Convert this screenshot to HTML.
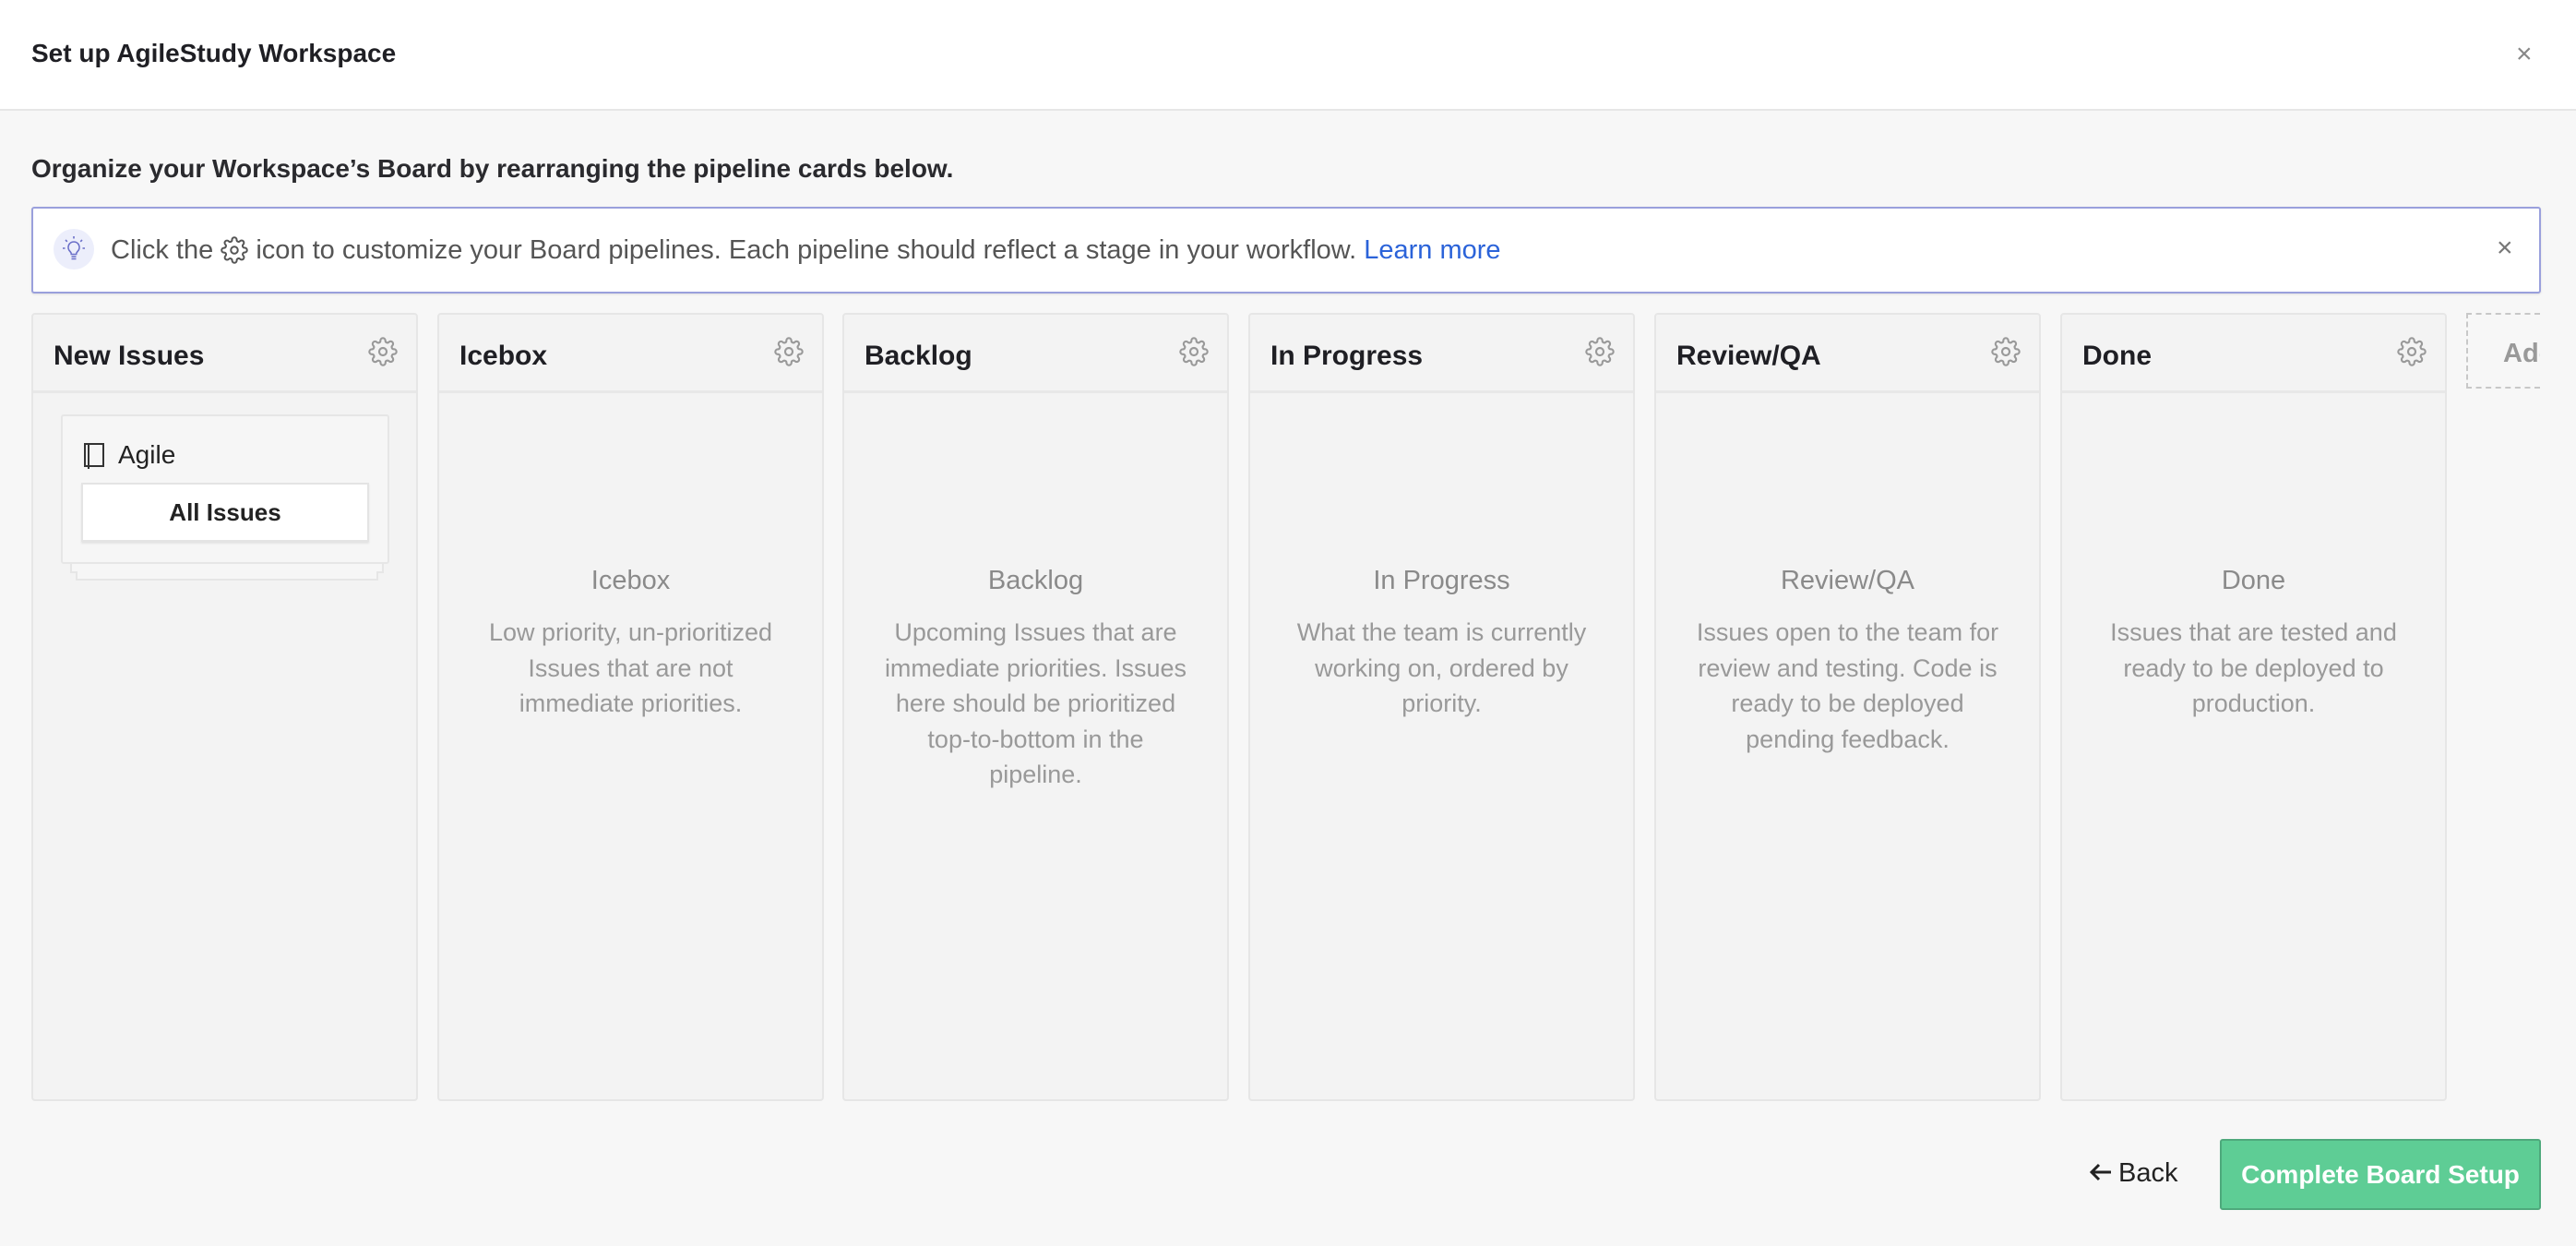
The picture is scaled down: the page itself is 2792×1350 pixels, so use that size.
<!DOCTYPE html>
<html><head><meta charset="utf-8"><style>
*{box-sizing:border-box;margin:0;padding:0}
body{width:2792px;height:1350px;background:#f7f7f7;font-family:"Liberation Sans",Arial,sans-serif;position:relative;overflow:hidden;color:#222}
.hdr{position:absolute;left:0;top:0;width:2792px;height:120px;background:#fff;border-bottom:2px solid #e6e6e6}
.hdr h1{position:absolute;left:34px;top:42px;font-size:28px;font-weight:bold;color:#1f1f24}
.x{position:absolute;color:#888;font-size:30px;line-height:30px}
.intro{position:absolute;left:34px;top:167px;font-size:28px;font-weight:bold;color:#2a2a2e}
.banner{position:absolute;left:34px;top:224px;width:2720px;height:94px;background:#fff;border:2px solid #9aa0dc;border-radius:3px;box-shadow:0 1px 2px rgba(0,0,0,.1)}
.bulb{position:absolute;left:22px;top:22px;width:44px;height:44px;border-radius:50%;background:#eceefb}
.btext{position:absolute;left:84px;top:29px;font-size:29px;color:#555;white-space:nowrap}
.btext a{color:#2b63d9;text-decoration:none}
.col{position:absolute;top:339px;width:419px;height:854px;background:#f3f3f3;border:2px solid #e6e6e6;border-radius:4px}
.ch{height:85px;border-bottom:3px solid #e8e8e8;position:relative}
.ch span{position:absolute;left:22px;top:28px;font-size:30px;font-weight:bold;color:#1f1f24}
.ch svg{position:absolute;right:20px;top:24px}
.es{position:absolute;left:0;right:0;top:272px;text-align:center;color:#8a8a8a}
.es b{display:block;font-weight:normal;font-size:29px;margin-bottom:20px}
.es p{font-size:27px;line-height:38.5px;color:#999;margin-top:4px}
.card{position:absolute;left:30px;top:108px;width:356px;height:162px;background:#f6f6f6;border:2px solid #e6e6e6;border-radius:3px}
.stk{position:absolute;background:#f6f6f6;border:2px solid #e6e6e6;border-top:none}
.allb{position:absolute;left:20px;top:72px;width:312px;height:64px;background:#fff;border:2px solid #e4e4e4;box-shadow:0 2px 2px rgba(0,0,0,.08);text-align:center;line-height:60px;font-size:26px;font-weight:bold;color:#222}
.add{position:absolute;left:2673px;top:339px;width:80px;height:82px;border:2px dashed #c8c8c8;border-right:none;overflow:hidden}
.add span{position:absolute;left:38px;top:26px;font-size:29px;font-weight:bold;color:#999}
.back{position:absolute;left:2264px;top:1255px;font-size:29px;color:#222}
.go{position:absolute;left:2406px;top:1234px;width:348px;height:77px;background:#5ecd95;border:2px solid #4ea97c;border-radius:3px;color:#fff;font-size:28px;font-weight:bold;text-align:center;line-height:73px}
</style></head><body>
<div class="hdr"><h1>Set up AgileStudy Workspace</h1><div class="x" style="left:2727px;top:44px">×</div></div>
<div class="intro">Organize your Workspace’s Board by rearranging the pipeline cards below.</div>
<div class="banner">
 <div class="bulb"><svg width="44" height="44" viewBox="0 0 44 44" fill="none" stroke="#6a6fc8" stroke-width="1.6"><path d="M22 14a6 6 0 0 0-4 10.5c1 1 1.3 2 1.3 3h5.4c0-1 .3-2 1.3-3A6 6 0 0 0 22 14z"/><path d="M19.5 30h5M19.5 32.5h5M22 8v2.5M13 12l1.8 1.8M31 12l-1.8 1.8M10 21h2.5M34 21h-2.5"/></svg></div>
 <div class="btext">Click the <svg width="30" height="30" viewBox="0 0 24 24" style="vertical-align:-6px"><use href="#gear2"/></svg> icon to customize your Board pipelines. Each pipeline should reflect a stage in your workflow. <a>Learn more</a></div>
 <div class="x" style="left:2670px;top:28px;color:#777">×</div>
</div>

<svg width="0" height="0" style="position:absolute"><defs>
<path id="gp" d="M19.4 15a1.65 1.65 0 0 0 .33 1.82l.06.06a2 2 0 1 1-2.83 2.83l-.06-.06a1.65 1.65 0 0 0-1.82-.33 1.65 1.65 0 0 0-1 1.51V21a2 2 0 1 1-4 0v-.09A1.65 1.65 0 0 0 9 19.4a1.65 1.65 0 0 0-1.82.33l-.06.06a2 2 0 1 1-2.83-2.83l.06-.06a1.65 1.65 0 0 0 .33-1.82 1.65 1.65 0 0 0-1.51-1H3a2 2 0 1 1 0-4h.09A1.65 1.65 0 0 0 4.6 9a1.65 1.65 0 0 0-.33-1.82l-.06-.06a2 2 0 1 1 2.83-2.83l.06.06a1.65 1.65 0 0 0 1.82.33H9a1.65 1.65 0 0 0 1-1.51V3a2 2 0 1 1 4 0v.09a1.65 1.65 0 0 0 1 1.51 1.65 1.65 0 0 0 1.82-.33l.06-.06a2 2 0 1 1 2.83 2.83l-.06.06a1.65 1.65 0 0 0-.33 1.82V9a1.65 1.65 0 0 0 1.51 1H21a2 2 0 1 1 0 4h-.09a1.65 1.65 0 0 0-1.51 1z"/>
<g id="gear" fill="none" stroke="#999" stroke-width="1.6"><circle cx="12" cy="12" r="3"/><use href="#gp"/></g>
<g id="gear2" fill="none" stroke="#555" stroke-width="1.6"><circle cx="12" cy="12" r="3"/><use href="#gp"/></g>
</defs></svg>

<div class="col" style="left:34px"><div class="ch"><span>New Issues</span><svg width="32" height="32" viewBox="0 0 24 24"><use href="#gear"/></svg></div>
 <div class="stk" style="left:40px;top:268px;width:340px;height:12px"></div>
 <div class="stk" style="left:46px;top:278px;width:328px;height:10px"></div>
 <div class="card"><svg style="position:absolute;left:22px;top:28px" width="24" height="30" viewBox="0 0 24 30" fill="none" stroke="#333" stroke-width="2"><rect x="2" y="2" width="20" height="24"/><path d="M6 2v24M6 26v3"/></svg><span style="position:absolute;left:60px;top:26px;font-size:28px;color:#222">Agile</span><div class="allb">All Issues</div></div>
</div>
<div class="col" style="left:474px"><div class="ch"><span>Icebox</span><svg width="32" height="32" viewBox="0 0 24 24"><use href="#gear"/></svg></div>
 <div class="es"><b>Icebox</b><p>Low priority, un-prioritized<br>Issues that are not<br>immediate priorities.</p></div></div>
<div class="col" style="left:913px"><div class="ch"><span>Backlog</span><svg width="32" height="32" viewBox="0 0 24 24"><use href="#gear"/></svg></div>
 <div class="es"><b>Backlog</b><p>Upcoming Issues that are<br>immediate priorities. Issues<br>here should be prioritized<br>top-to-bottom in the<br>pipeline.</p></div></div>
<div class="col" style="left:1353px"><div class="ch"><span>In Progress</span><svg width="32" height="32" viewBox="0 0 24 24"><use href="#gear"/></svg></div>
 <div class="es"><b>In Progress</b><p>What the team is currently<br>working on, ordered by<br>priority.</p></div></div>
<div class="col" style="left:1793px"><div class="ch"><span>Review/QA</span><svg width="32" height="32" viewBox="0 0 24 24"><use href="#gear"/></svg></div>
 <div class="es"><b>Review/QA</b><p>Issues open to the team for<br>review and testing. Code is<br>ready to be deployed<br>pending feedback.</p></div></div>
<div class="col" style="left:2233px"><div class="ch"><span>Done</span><svg width="32" height="32" viewBox="0 0 24 24"><use href="#gear"/></svg></div>
 <div class="es"><b>Done</b><p>Issues that are tested and<br>ready to be deployed to<br>production.</p></div></div>
<div class="add"><span>Add</span></div>

<div class="back"><svg width="26" height="22" viewBox="0 0 26 22" style="vertical-align:-1px;margin-right:6px" fill="none" stroke="#222" stroke-width="3"><path d="M24 11H4M11 3l-8 8 8 8"/></svg>Back</div>
<div class="go">Complete Board Setup</div>
</body></html>
